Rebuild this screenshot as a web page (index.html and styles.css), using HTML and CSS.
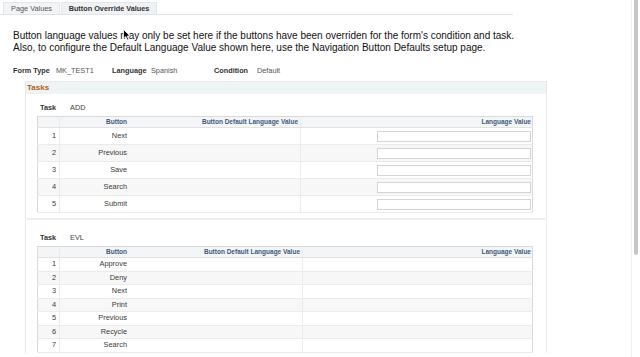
FILE: index.html
```html
<!DOCTYPE html>
<html>
<head>
<meta charset="utf-8">
<link rel="stylesheet" href="styles.css">
</head>
<body>
<div class="page">
  <div class="tabs">
    <div class="tab">Page Values</div>
    <div class="tab active">Button Override Values</div>
  </div>
  <div class="intro">
    <p>Button language values may only be set here if the buttons have been overriden for the form's condition and task.</p>
    <p>Also, to configure the Default Language Value shown here, use the Navigation Button Defaults setup page.</p>
  </div>
  <div class="form-row">
    <span class="lbl">Form Type</span><span class="val">MK_TEST1</span>
    <span class="lbl">Language</span><span class="val">Spanish</span>
    <span class="lbl">Condition</span><span class="val">Default</span>
  </div>
  <div class="tasks">
    <div class="tasks-head">Tasks</div>
    <div class="group g1">
      <div class="task-line"><span class="tlbl">Task</span><span class="tval">ADD</span></div>
      <table class="grid big">
        <thead><tr><th class="c-num"></th><th class="c-btn">Button</th><th class="c-def">Button Default Language Value</th><th class="c-lang">Language Value</th></tr></thead>
        <tbody>
          <tr><td class="c-num">1</td><td class="c-btn">Next</td><td class="c-def"></td><td class="c-lang"><span class="input"></span></td></tr>
          <tr class="alt"><td class="c-num">2</td><td class="c-btn">Previous</td><td class="c-def"></td><td class="c-lang"><span class="input"></span></td></tr>
          <tr><td class="c-num">3</td><td class="c-btn">Save</td><td class="c-def"></td><td class="c-lang"><span class="input"></span></td></tr>
          <tr class="alt"><td class="c-num">4</td><td class="c-btn">Search</td><td class="c-def"></td><td class="c-lang"><span class="input"></span></td></tr>
          <tr><td class="c-num">5</td><td class="c-btn">Submit</td><td class="c-def"></td><td class="c-lang"><span class="input"></span></td></tr>
        </tbody>
      </table>
    </div>
    <div class="group g2">
      <div class="task-line"><span class="tlbl">Task</span><span class="tval">EVL</span></div>
      <table class="grid small">
        <thead><tr><th class="c-num"></th><th class="c-btn2">Button</th><th class="c-def2">Button Default Language Value</th><th class="c-lang">Language Value</th></tr></thead>
        <tbody>
          <tr><td class="c-num">1</td><td class="c-btn2">Approve</td><td class="c-def2"></td><td class="c-lang"></td></tr>
          <tr class="alt"><td class="c-num">2</td><td class="c-btn2">Deny</td><td class="c-def2"></td><td class="c-lang"></td></tr>
          <tr><td class="c-num">3</td><td class="c-btn2">Next</td><td class="c-def2"></td><td class="c-lang"></td></tr>
          <tr class="alt"><td class="c-num">4</td><td class="c-btn2">Print</td><td class="c-def2"></td><td class="c-lang"></td></tr>
          <tr><td class="c-num">5</td><td class="c-btn2">Previous</td><td class="c-def2"></td><td class="c-lang"></td></tr>
          <tr class="alt"><td class="c-num">6</td><td class="c-btn2">Recycle</td><td class="c-def2"></td><td class="c-lang"></td></tr>
          <tr><td class="c-num">7</td><td class="c-btn2">Search</td><td class="c-def2"></td><td class="c-lang"></td></tr>
        </tbody>
      </table>
    </div>
  </div>
</div>
<div class="scrollbar"><div class="thumb"></div></div>
<svg class="cursor" width="8" height="12" viewBox="0 0 8 12"><path d="M0.5 0.5 L0.5 9.5 L2.7 7.6 L4.2 11 L5.6 10.4 L4.1 7.1 L7 7 Z" fill="#000" stroke="#fff" stroke-width="0.8"/></svg>
</body>
</html>
```

FILE: styles.css
```css
html, body {
  margin: 0;
  padding: 0;
  background: #fff;
  overflow: hidden;
}
body {
  width: 640px;
  height: 357px;
  font-family: "Liberation Sans", Arial, sans-serif;
  color: #333;
  position: relative;
}
.page {
  width: 630px;
}
.tabs {
  display: flex;
  gap: 1px;
  padding: 2px 0 0 3px;
  width: 510px;
  border-bottom: 1px solid #dfe4e8;
  height: 12px;
}
.tab {
  height: 12px;
  line-height: 12px;
  font-size: 7.3px;
  color: #555;
  background: #f3f4f5;
  border: 1px solid #e4e6e8;
  border-bottom: none;
  box-sizing: border-box;
  width: 57px;
  text-align: center;
  white-space: nowrap;
}
.tab.active {
  width: 96px;
  font-weight: bold;
  color: #333;
  background: #eef2f5;
}
.intro {
  padding: 15px 0 0 13px;
}
.intro p {
  margin: 0;
  font-size: 10px;
  line-height: 12px;
  color: #111;
  white-space: nowrap;
}
.form-row {
  padding: 11px 0 0 13px;
  font-size: 7.3px;
  height: 12px;
  line-height: 12px;
  white-space: nowrap;
  display: grid;
  grid-template-columns: 43px 56px 39px 63px 43px auto;
}
.lbl {
  font-weight: bold;
  color: #333;
}
.val {
  color: #555;
}
.tasks {
  margin: 4px 0 0 25px;
  width: 522px;
  border: 1px solid #e6eaea;
  border-bottom: none;
  box-sizing: border-box;
}
.tasks-head {
  background: #eef4f4;
  height: 12px;
  line-height: 12px;
  font-size: 8px;
  font-weight: bold;
  color: #b0601a;
  padding-left: 1px;
}
.group {
  padding: 0 13px 0 11px;
}
.g1 {
  border-bottom: 2px solid #eeeeee;
  padding-bottom: 5px;
  margin: 0 1px;
  padding-left: 10px;
}
.task-line {
  height: 22px;
  line-height: 28px;
  font-size: 7.3px;
  white-space: nowrap;
}
.g2 .task-line {
  height: 26px;
  line-height: 36px;
}
.tlbl {
  font-weight: bold;
  color: #333;
  padding-left: 3px;
  margin-right: 14px;
}
.tval {
  color: #444;
}
.grid {
  border-collapse: collapse;
  width: 496px;
  font-size: 7.4px;
  border: 1px solid #d9d9d9;
  table-layout: fixed;
}
.grid th {
  background: #f4f5f6;
  color: #3e5a7e;
  font-weight: bold;
  text-align: right;
  height: 10px;
  line-height: 10px;
  padding: 0 2px;
  border-bottom: 1px solid #e2e2e2;
  font-size: 6.5px;
}
.grid td {
  color: #3a3a3a;
  text-align: right;
  padding: 0 2px;
  border-bottom: 1px solid #ebebeb;
}
.grid .c-num { width: 16px; border-right: 1px solid #ebebeb; padding-right: 3px; }
.grid .c-btn { width: 65px; }
.grid .c-def { width: 167px; border-right: 1px solid #ebebeb; }
.grid .c-btn2 { width: 65px; }
.grid .c-def2 { width: 169px; border-right: 1px solid #ebebeb; }
.grid .c-lang { padding-right: 1px; }
.grid tr.alt td { background: #f7f7f7; }
.big td {
  height: 16px;
  line-height: 16px;
}
.small td {
  height: 12.5px;
  line-height: 12px;
}
.input {
  display: block;
  width: 154px;
  height: 11px;
  box-sizing: border-box;
  border: 1px solid #d4d4d4;
  background: #fff;
  margin-left: auto;
}
.scrollbar {
  position: absolute;
  top: 0;
  right: 0;
  width: 8px;
  height: 357px;
  background: #fff;
  border-left: 1px solid #f0f0f0;
}
.thumb {
  position: absolute;
  top: 0;
  left: 2px;
  width: 4px;
  height: 255px;
  background: #c6c6c6;
  border-radius: 0 0 2px 2px;
}
.cursor {
  position: absolute;
  left: 123px;
  top: 29px;
}
```
